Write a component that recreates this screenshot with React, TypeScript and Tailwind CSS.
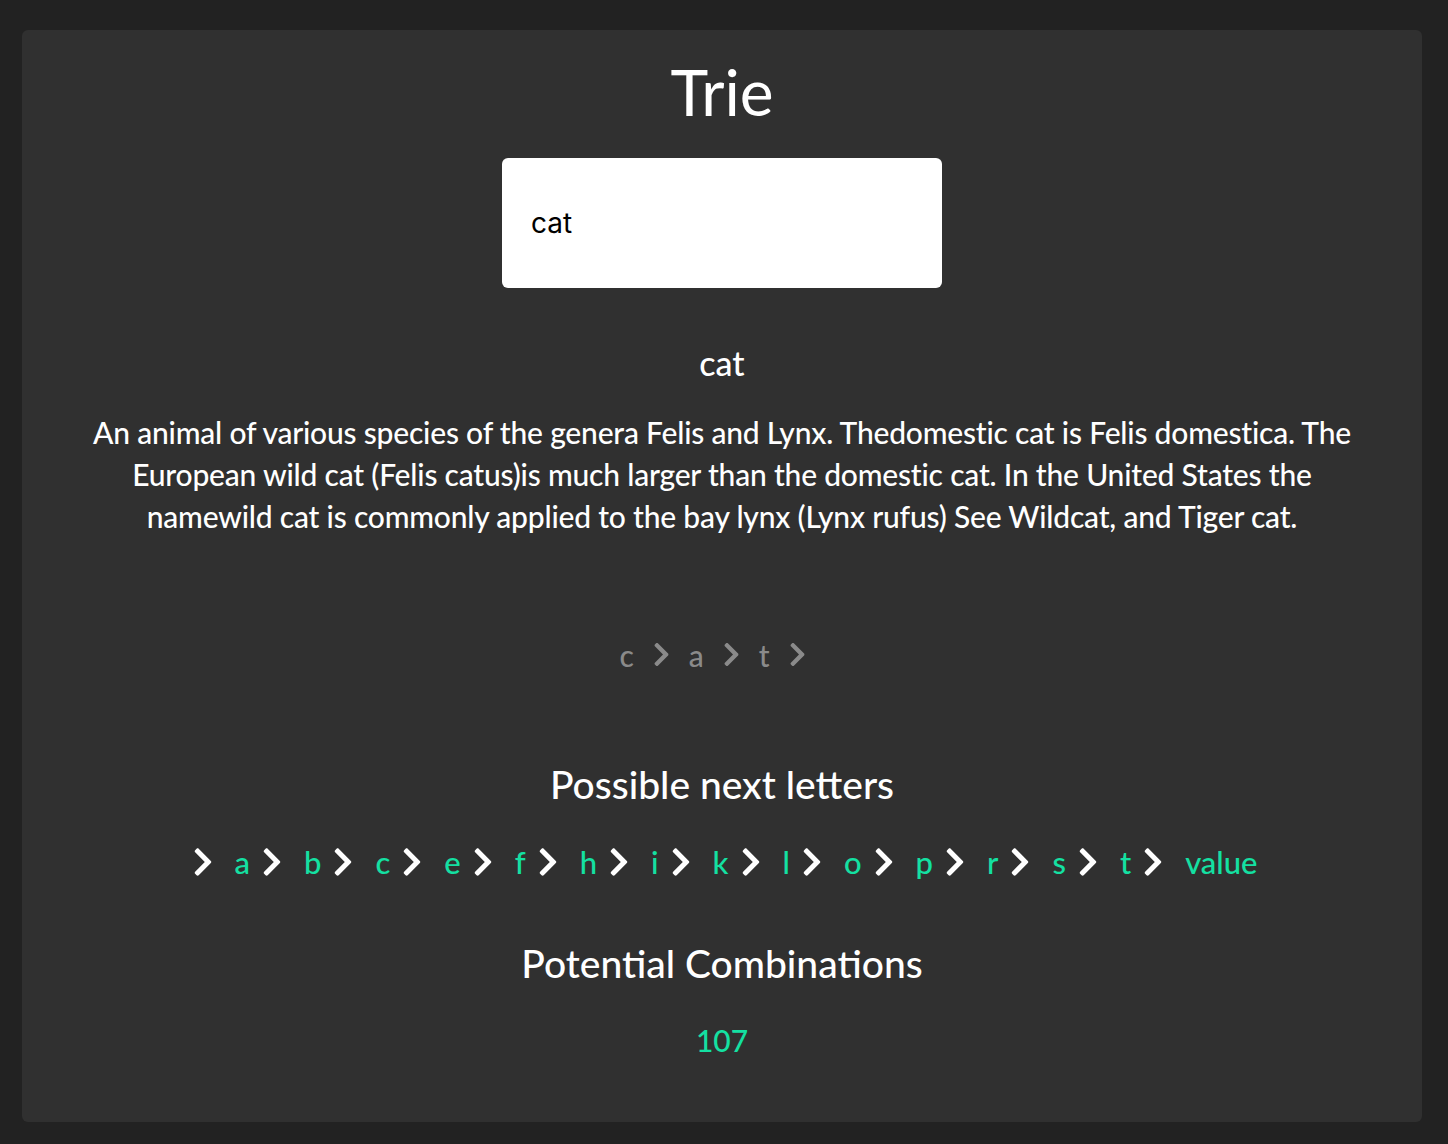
import React, { useState } from 'react';
import { FaChevronRight } from 'react-icons/fa';

const nextLetters = ['a', 'b', 'c', 'e', 'f', 'h', 'i', 'k', 'l', 'o', 'p', 'r', 's', 't', 'value'];

const definition =
    'An animal of various species of the genera Felis and Lynx. Thedomestic cat is Felis domestica. The European wild cat (Felis catus)is much larger than the domestic cat. In the United States the namewild cat is commonly applied to the bay lynx (Lynx rufus) See Wildcat, and Tiger cat.';

const App: React.FC = () => {
    const [word, setWord] = useState<string>('cat');

    return (
        <div className="min-h-screen bg-[#222222] pt-[30px] pb-[23px] pl-[22px]" style={{ fontFamily: 'Lato, "Open Sans", sans-serif' }}>
            <div className="w-[1400px] rounded-[6px] bg-[#303030] px-[70px] pt-[24px] pb-[64px] flex flex-col items-center text-white font-medium">
                <h1 className="text-[64px] leading-[1.2] font-normal">Trie</h1>

                <input
                    value={word}
                    onChange={(e) => setWord(e.target.value)}
                    className="mt-[27px] w-[440px] h-[130px] rounded-[6px] bg-white pl-[29px] text-[28px] font-normal text-black outline-none"
                    style={{ fontFamily: 'Inter, "Open Sans", sans-serif' }}
                />

                <div className="mt-[55px] text-[34px] leading-[1.2]">{word}</div>

                <p className="mt-[27px] text-center text-[30px] leading-[42px] tracking-[-0.2px]">{definition}</p>

                {/* path through the trie */}
                <div className="mt-[100px] flex items-center text-[30px] leading-[36px] text-[#8a8a8a]">
                    {word.split('').map((ch, i) => (
                        <span key={i} className="flex items-center">
                            <span>{ch}</span>
                            <FaChevronRight size={27} className="ml-[14px] mr-[14px]" />
                        </span>
                    ))}
                </div>

                <h2 className="mt-[88px] text-[39px] leading-[1.2]">Possible next letters</h2>

                <div className="mt-[37px] h-[36px] flex items-center gap-[6px] text-[31px] leading-[36px]">
                    {nextLetters.map((l) => (
                        <span key={l} className="flex items-center">
                            <FaChevronRight size={32} className="mr-[16px] text-white" />
                            <span className="text-[#14e0a2]">{l}</span>
                        </span>
                    ))}
                </div>

                <h2 className="mt-[60px] text-[39px] leading-[1.2]">Potential Combinations</h2>

                <div className="mt-[35px] text-[30px] leading-[36px] text-[#14e0a2]">107</div>
            </div>
        </div>
    );
};

export default App;
